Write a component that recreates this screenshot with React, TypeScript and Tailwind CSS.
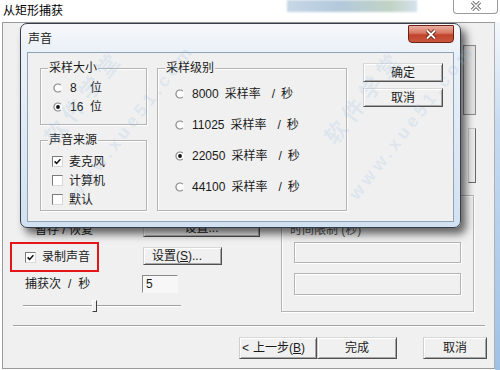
import React from "react";

const txt = "text-[12px] leading-[14px] text-[#1a1a1a]";

function Radio({ checked }: { checked?: boolean }) {
  return (
    <svg width="10" height="10" viewBox="0 0 10 10" className="shrink-0">
      <circle cx="5" cy="5" r="4" fill="#fdfdfd" />
      <path d="M7.8 2.2 A4 4 0 1 0 7.8 7.8" stroke="#8a8a8a" strokeWidth="1.2" fill="none" />
      {checked && <circle cx="5" cy="5" r="1.9" fill="#111" />}
    </svg>
  );
}

function Check({ checked }: { checked?: boolean }) {
  return (
    <span className="w-[11px] h-[11px] shrink-0 bg-white border border-t-[#7a7a7a] border-l-[#7a7a7a] border-r-[#d8d8d8] border-b-[#d8d8d8] flex items-center justify-center">
      {checked && (
        <svg width="7" height="7" viewBox="0 0 7 7">
          <path d="M0.6 3.4 L2.6 5.4 L6.4 1.2" stroke="#111" strokeWidth="1.5" fill="none" />
        </svg>
      )}
    </span>
  );
}

function Btn({ children, className = "" }: { children: React.ReactNode; className?: string }) {
  return (
    <div
      className={
        "flex items-center bg-[#f0f0f0] border border-t-[#d8d8d8] border-l-[#cfcfcf] border-r-[#505050] border-b-[#505050] shadow-[inset_1px_1px_0_#fff,inset_-1px_-1px_0_#a8a8a8] " +
        txt +
        " " +
        className
      }
    >
      {children}
    </div>
  );
}

function Group({ label, className = "", children }: { label?: string; className?: string; children?: React.ReactNode }) {
  return (
    <div className={"relative border border-[#b4b4b4] shadow-[1px_1px_0_#fff,inset_1px_1px_0_#fff] " + className}>
      {label && (
        <span className={"absolute -top-[8px] left-[7px] px-[1px] bg-[#f0f0f0] " + txt}>{label}</span>
      )}
      {children}
    </div>
  );
}

function RateRow({ n, checked }: { n: string; checked?: boolean }) {
  return (
    <div className={"flex items-center h-[31px] pl-[17px] " + txt}>
      <Radio checked={checked} />
      <span className="ml-[7px]">{n}</span>
      <span className="ml-[6px]">采样率</span>
      <span className="ml-[11px]">/</span>
      <span className="ml-[6px]">秒</span>
    </div>
  );
}

function Watermark({ x, y }: { x: number; y: number }) {
  return (
    <div
      className="absolute pointer-events-none text-[#8fb8e0] opacity-[0.18] font-bold origin-left"
      style={{ left: x, top: y, transform: "rotate(-52deg)" }}
    >
      <div className="text-[22px] leading-[24px] tracking-[6px]">软件学堂</div>
      <div className="text-[18px] leading-[20px] mt-[30px] ml-[-30px] tracking-[4px]">www.xue51.com</div>
    </div>
  );
}

export default function App() {
  return (
    <div className="relative w-[500px] h-[370px] overflow-hidden bg-white font-['Liberation_Sans','Noto_Sans_CJK_SC',sans-serif]">
      {/* top strip */}
      <div className="flex h-[22px]">
        <div className="w-[287px] pl-[3px] pt-[4px] text-[12px] leading-[14px] text-black">从矩形捕获</div>
        <div className="w-[130px] h-[12px] bg-[linear-gradient(to_right,#c7d7e6,#b3c9dc_40%,#c1d3c4_80%,#d6e2ee)] blur-[1px]" />
        <div className="w-[36px]" />
        <div className="w-[45px] h-[15px] -mt-[1px] border border-t-0 border-[#9a9a9a] rounded-b-[4px] bg-white flex items-center justify-center">
          <svg width="14" height="10" viewBox="0 0 14 10">
            <path d="M3 1 L11 9 M11 1 L3 9" stroke="#6d6d6d" strokeWidth="3.2" />
            <path d="M3 1 L11 9 M11 1 L3 9" stroke="#fafafa" strokeWidth="1.4" />
          </svg>
        </div>
      </div>

      {/* outer window body */}
      <div className="flex h-[348px]">
        <div className="ml-[2px] w-[493px] h-[347px] bg-[#f0f0f0] border border-[#9a9a9a] border-r-[#b0b0b0] flex flex-col">
          {/* upper (mostly hidden) */}
          <div className="flex h-[172px] shrink-0">
            <div className="w-[460px]" />
            <div className="flex flex-col">
              <div className="mt-[22px] w-[13px] h-[70px] border border-[#8a8a8a] bg-[#e2e2e2]" />
              <div className="mt-[13px] ml-[5px] w-[8px] h-[55px] border border-[#c8c8c8] border-r-[#6a6a6a] border-b-[#6a6a6a] bg-[#ececec]" />
            </div>
          </div>

          {/* middle */}
          <div className="flex shrink-0">
            <div className="w-[278px] flex flex-col">
              <div className="flex mt-[24px] h-[18px]">
                <div className={"w-[140px] pl-[32px] pt-[4px] " + txt}>暂存 / 恢复</div>
                <Btn className="w-[117px] h-[18px] justify-center">设置...</Btn>
              </div>
              <div className="flex mt-[5px]">
                <div className="ml-[7px] w-[89px] h-[30px] border-2 border-[#e4161b] flex items-center pl-[13px]">
                  <Check checked />
                  <span className={"ml-[6px] " + txt}>录制声音</span>
                </div>
                <Btn className="ml-[44px] mt-[5px] w-[79px] h-[18px] pl-[8px]">
                  设置(<span className="underline">S</span>)...
                </Btn>
              </div>
              <div className="flex items-center mt-[3px]">
                <div className={"ml-[22px] w-[117px] flex " + txt}>
                  <span>捕获次</span>
                  <span className="ml-[7px]">/</span>
                  <span className="ml-[7px]">秒</span>
                </div>
                <div className={"w-[36px] h-[18px] bg-[#f7f7f7] border border-t-[#8a8a8a] border-l-[#8a8a8a] border-r-[#f8f8f8] border-b-[#f8f8f8] pl-[3px] flex items-center " + txt}>
                  5
                </div>
              </div>
              <div className="flex items-center mt-[7px] h-[12px] ml-[20px]">
                <div className="w-[69px] h-[2px] border-t border-[#a0a0a0] border-b border-b-white" />
                <div className="w-[5px] h-[12px] border border-l-white border-t-white border-r-[#404040] border-b-[#404040] bg-[#f0f0f0]" />
                <div className="w-[84px] h-[2px] border-t border-[#a0a0a0] border-b border-b-white" />
              </div>
            </div>
            <div className="w-[193px] h-[117px] border border-[#b4b4b4] shadow-[1px_1px_0_#fff,inset_1px_1px_0_#fff] flex flex-col pl-[12px]">
              <div className="mt-[28px] ml-[-4px] text-[12px] leading-[12px] text-[#555]">时间限制 (秒)</div>
              <div className="mt-[6px] w-[167px] h-[21px] border border-[#b4b4b4] shadow-[1px_1px_0_#fff,inset_1px_1px_0_#fff]" />
              <div className="mt-[10px] w-[167px] h-[22px] border border-[#b4b4b4] shadow-[1px_1px_0_#fff,inset_1px_1px_0_#fff]" />
            </div>
          </div>

          {/* separator */}
          <div className="mt-[13px] ml-[10px] w-[472px] h-[2px] border-t border-[#a0a0a0] border-b border-b-white shrink-0" />

          {/* wizard buttons */}
          <div className="flex mt-[10px] ml-[236px]">
            <Btn className="w-[78px] h-[22px] pl-[2px]">
              <span>&lt;</span>
              <span className="ml-[4px]">上一步(<span className="underline">B</span>)</span>
            </Btn>
            <Btn className="w-[80px] h-[22px] justify-center">完成</Btn>
            <Btn className="ml-[26px] w-[64px] h-[22px] justify-center">取消</Btn>
          </div>
        </div>
        <div className="w-[5px] h-full bg-[linear-gradient(to_bottom,#f4f8fc,#c6dbf1_30%,#9fc1e6)]" />
      </div>

      {/* 声音 dialog */}
      <div className="absolute left-[20px] top-[23px] w-[441px] h-[205px] rounded-[7px] border border-[#343f4b] bg-[linear-gradient(to_bottom,#f6f8fb_0%,#eaf0f7_15%,#d2e1f1_100%)] shadow-[5px_6px_9px_rgba(0,0,0,0.6)] flex flex-col">
        <div className="relative h-[28px] shrink-0">
          <div className={"pl-[7px] pt-[8px] " + txt}>声音</div>
          <div className="absolute top-[1px] right-[6px] w-[46px] h-[18px] rounded-b-[4px] rounded-t-[1px] border border-[#6b2116] bg-[linear-gradient(to_bottom,#eab0a2_0%,#d77560_45%,#c2432c_55%,#c9583e_100%)] flex items-center justify-center">
            <svg width="14" height="11" viewBox="0 0 14 11">
              <path d="M3 1.5 L11 9.5 M11 1.5 L3 9.5" stroke="#5a1a10" strokeWidth="3.6" />
              <path d="M3 1.5 L11 9.5 M11 1.5 L3 9.5" stroke="#ffffff" strokeWidth="1.8" />
            </svg>
          </div>
        </div>
        <div className="mx-[6px] h-[170px] border border-[#8fa3b8] bg-[#f0f0f0] flex">
          <div className="ml-[12px] mt-[15px] flex flex-col">
            <Group label="采样大小" className="w-[107px] h-[57px] pt-[9px]">
              <div className={"flex items-center h-[19px] pl-[12px] " + txt}>
                <Radio />
                <span className="ml-[7px] w-[20px]">8</span>
                <span>位</span>
              </div>
              <div className={"flex items-center h-[19px] pl-[12px] " + txt}>
                <Radio checked />
                <span className="ml-[7px] w-[20px]">16</span>
                <span>位</span>
              </div>
            </Group>
            <Group label="声音来源" className="mt-[15px] w-[107px] h-[71px] pt-[11px]">
              <div className={"flex items-center h-[19px] pl-[11px] " + txt}>
                <Check checked />
                <span className="ml-[6px]">麦克风</span>
              </div>
              <div className={"flex items-center h-[19px] pl-[11px] " + txt}>
                <Check />
                <span className="ml-[6px]">计算机</span>
              </div>
              <div className={"flex items-center h-[19px] pl-[11px] " + txt}>
                <Check />
                <span className="ml-[6px]">默认</span>
              </div>
            </Group>
          </div>
          <Group label="采样级别" className="ml-[10px] mt-[15px] w-[190px] h-[143px] pt-[9px]">
            <RateRow n="8000" />
            <RateRow n="11025" />
            <RateRow n="22050" checked />
            <RateRow n="44100" />
          </Group>
          <div className="ml-[16px] mt-[10px] flex flex-col">
            <Btn className="w-[80px] h-[19px] justify-center border-t-[#8a8a8a] border-l-[#8a8a8a]">确定</Btn>
            <Btn className="mt-[6px] w-[80px] h-[19px] justify-center">取消</Btn>
          </div>
        </div>
      </div>

      <Watermark x={70} y={120} />
      <Watermark x={350} y={120} />
    </div>
  );
}
